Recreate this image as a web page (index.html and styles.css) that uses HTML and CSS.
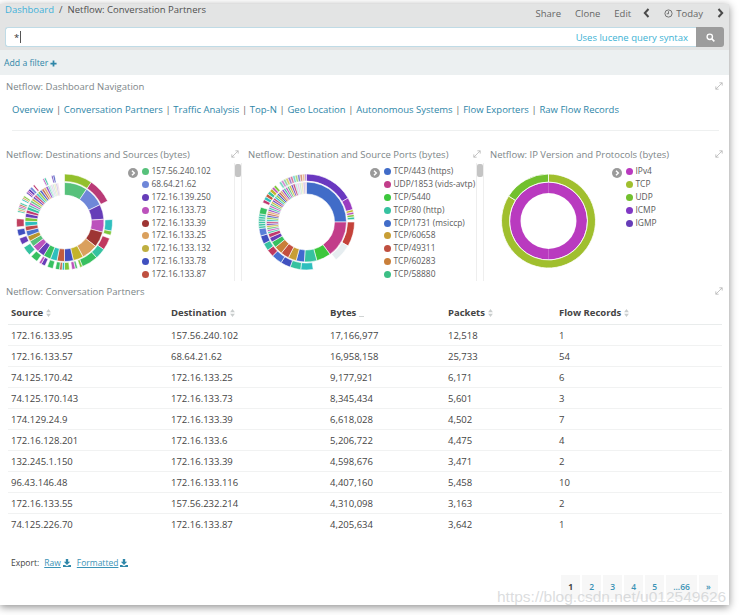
FILE: index.html
```html
<!DOCTYPE html>
<html lang="en">
<head>
<meta charset="utf-8">
<title>Netflow: Conversation Partners</title>
<link rel="stylesheet" href="styles.css">
</head>
<body>
<svg class="defs" width="0" height="0" aria-hidden="true">
  <symbol id="i-expand" viewBox="0 0 10 10"><path d="M1 9l8-8M5.500 1H9v3.500M1 5.500V9h3.500" fill="none" stroke="currentColor" stroke-width="1"/></symbol>
  <symbol id="i-sort" viewBox="0 0 6 10"><path d="M3 0l3 4H0zM3 10L0 6h6z" fill="currentColor"/></symbol>
  <symbol id="i-dl" viewBox="0 0 10 10"><path d="M3.500 0h3v3.500H9L5 7.500 1 3.500h2.500zM0 7.500h2.500L5 9l2.500-1.500H10V10H0z" fill="currentColor"/></symbol>
  <symbol id="i-next" viewBox="0 0 12 12"><circle cx="6" cy="6" r="6" fill="#9a9a9a"/><path d="M4.800 3.200L7.600 6 4.800 8.800" fill="none" stroke="#fff" stroke-width="1.700"/></symbol>
</svg>
<div class="app">
  <header class="topbar">
    <div class="crumbs"><a class="crumb-link">Dashboard</a><span class="crumb-sep">/</span><span>Netflow: Conversation Partners</span></div>
    <nav class="actions">
      <span>Share</span><span>Clone</span><span>Edit</span>
      <svg class="chev chev-prev" viewBox="0 0 7 10"><path d="M5.500 1L1.800 5l3.700 4" fill="none" stroke="currentColor" stroke-width="2"/></svg>
      <span class="today"><svg class="clock" viewBox="0 0 10 10"><circle cx="5" cy="5" r="4" fill="none" stroke="currentColor" stroke-width="1"/><path d="M5 2.500V5.300H3" fill="none" stroke="currentColor" stroke-width="1"/></svg>Today</span>
      <svg class="chev" viewBox="0 0 7 10"><path d="M1.500 1l3.700 4-3.700 4" fill="none" stroke="currentColor" stroke-width="2"/></svg>
    </nav>
  </header>
  <div class="searchrow">
    <div class="searchbox"><span class="query">*</span><span class="caret"></span><a class="lucene">Uses lucene query syntax</a></div>
    <button class="searchbtn" type="button" aria-label="Search"><svg viewBox="0 0 10 10" class="searchicon"><circle cx="4.200" cy="4.200" r="3" fill="none" stroke="#fff" stroke-width="1.500"/><path d="M6.500 6.500L9.300 9.300" stroke="#fff" stroke-width="1.700"/></svg></button>
  </div>
  <div class="filterbar"><a>Add a filter</a><svg class="plus" viewBox="0 0 8 8"><path d="M4 .5v7M.5 4h7" stroke="currentColor" stroke-width="2"/></svg></div>

  <section class="panel nav-panel">
    <div class="panel-head"><h2>Netflow: Dashboard Navigation</h2><svg class="expand"><use href="#i-expand"/></svg></div>
    <p class="navlinks"><a>Overview</a><i>|</i><a>Conversation Partners</a><i>|</i><a>Traffic Analysis</a><i>|</i><a>Top-N</a><i>|</i><a>Geo Location</a><i>|</i><a>Autonomous Systems</a><i>|</i><a>Flow Exporters</a><i>|</i><a>Raw Flow Records</a></p>
    <hr class="rule">
  </section>

  <div class="charts">
    <section class="chart-panel">
      <div class="panel-head"><h2>Netflow: Destinations and Sources (bytes)</h2><svg class="expand"><use href="#i-expand"/></svg></div>
      <div class="chart-body">
        <svg class="donut" id="c1" viewBox="0 0 117 118"></svg>
        <svg class="legend-toggle"><use href="#i-next"/></svg>
        <ul class="legend">
          <li><b class="dot d-a"></b>157.56.240.102</li>
          <li><b class="dot d-b"></b>68.64.21.62</li>
          <li><b class="dot d-c"></b>172.16.139.250</li>
          <li><b class="dot d-d"></b>172.16.133.73</li>
          <li><b class="dot d-e"></b>172.16.133.39</li>
          <li><b class="dot d-f"></b>172.16.133.25</li>
          <li><b class="dot d-g"></b>172.16.133.132</li>
          <li><b class="dot d-h"></b>172.16.133.78</li>
          <li><b class="dot d-i"></b>172.16.133.87</li>
        </ul>
        <div class="scroll"><span></span></div>
      </div>
    </section>
    <section class="chart-panel">
      <div class="panel-head"><h2>Netflow: Destination and Source Ports (bytes)</h2><svg class="expand"><use href="#i-expand"/></svg></div>
      <div class="chart-body">
        <svg class="donut" id="c2" viewBox="0 0 117 118"></svg>
        <svg class="legend-toggle"><use href="#i-next"/></svg>
        <ul class="legend">
          <li><b class="dot d-j"></b>TCP/443 (https)</li>
          <li><b class="dot d-k"></b>UDP/1853 (vids-avtp)</li>
          <li><b class="dot d-l"></b>TCP/5440</li>
          <li><b class="dot d-m"></b>TCP/80 (http)</li>
          <li><b class="dot d-j"></b>TCP/1731 (msiccp)</li>
          <li><b class="dot d-n"></b>TCP/60658</li>
          <li><b class="dot d-i"></b>TCP/49311</li>
          <li><b class="dot d-o"></b>TCP/60283</li>
          <li><b class="dot d-p"></b>TCP/58880</li>
        </ul>
        <div class="scroll"><span></span></div>
      </div>
    </section>
    <section class="chart-panel">
      <div class="panel-head"><h2>Netflow: IP Version and Protocols (bytes)</h2><svg class="expand"><use href="#i-expand"/></svg></div>
      <div class="chart-body">
        <svg class="donut" id="c3" viewBox="0 0 117 118"></svg>
        <svg class="legend-toggle"><use href="#i-next"/></svg>
        <ul class="legend">
          <li><b class="dot d-q"></b>IPv4</li>
          <li><b class="dot d-r"></b>TCP</li>
          <li><b class="dot d-s"></b>UDP</li>
          <li><b class="dot d-t"></b>ICMP</li>
          <li><b class="dot d-c"></b>IGMP</li>
        </ul>
      </div>
    </section>
  </div>

  <section class="panel table-panel">
    <div class="panel-head"><h2>Netflow: Conversation Partners</h2><svg class="expand"><use href="#i-expand"/></svg></div>
    <table class="grid">
      <thead>
        <tr>
          <th>Source<svg class="sort"><use href="#i-sort"/></svg></th>
          <th>Destination<svg class="sort"><use href="#i-sort"/></svg></th>
          <th>Bytes<span class="sort-desc"></span></th>
          <th>Packets<svg class="sort"><use href="#i-sort"/></svg></th>
          <th>Flow Records<svg class="sort"><use href="#i-sort"/></svg></th>
        </tr>
      </thead>
      <tbody>
        <tr><td>172.16.133.95</td><td>157.56.240.102</td><td>17,166,977</td><td>12,518</td><td>1</td></tr>
        <tr><td>172.16.133.57</td><td>68.64.21.62</td><td>16,958,158</td><td>25,733</td><td>54</td></tr>
        <tr><td>74.125.170.42</td><td>172.16.133.25</td><td>9,177,921</td><td>6,171</td><td>6</td></tr>
        <tr><td>74.125.170.143</td><td>172.16.133.73</td><td>8,345,434</td><td>5,601</td><td>3</td></tr>
        <tr><td>174.129.24.9</td><td>172.16.133.39</td><td>6,618,028</td><td>4,502</td><td>7</td></tr>
        <tr><td>172.16.128.201</td><td>172.16.133.6</td><td>5,206,722</td><td>4,475</td><td>4</td></tr>
        <tr><td>132.245.1.150</td><td>172.16.133.39</td><td>4,598,676</td><td>3,471</td><td>2</td></tr>
        <tr><td>96.43.146.48</td><td>172.16.133.116</td><td>4,407,160</td><td>5,458</td><td>10</td></tr>
        <tr><td>172.16.133.55</td><td>157.56.232.214</td><td>4,310,098</td><td>3,163</td><td>2</td></tr>
        <tr><td>74.125.226.70</td><td>172.16.133.87</td><td>4,205,634</td><td>3,642</td><td>1</td></tr>
      </tbody>
    </table>
    <div class="export">Export:<a>Raw</a><svg class="dl"><use href="#i-dl"/></svg><a>Formatted</a><svg class="dl"><use href="#i-dl"/></svg></div>
    <div class="pager"><span class="current">1</span><a>2</a><a>3</a><a>4</a><a>5</a><a class="wide">...66</a><a>»</a></div>
  </section>
</div>
<div class="watermark">https://blog.csdn.net/u012549626</div>
<script src="charts.js"></script>
</body>
</html>
```
FILE: styles.css
```css
* { box-sizing: border-box; }
html, body { margin: 0; padding: 0; }
body {
  width: 740px;
  height: 615px;
  overflow: hidden;
  position: relative;
  background: #fff;
  padding-top: 4px;
  font-family: "Open Sans", "Liberation Sans", sans-serif;
  font-size: 9.500px;
  color: #444;
}
.defs { position: absolute; }
a { color: #2e86a8; }
.app {
  width: 729px;
  height: 601px;
  background: #fff;
  box-shadow: 0 2px 8px rgba(0, 0, 0, .45);
  position: relative;
}
.topbar {
  height: 23px;
  background: #e3e4e4;
  display: flex;
  justify-content: space-between;
  padding: 0 5px;
}
.crumbs { line-height: 11px; font-size: 9.500px; color: #505050; }
.crumb-link { color: #3fb1d9; }
.crumb-sep { margin: 0 5px 0 5px; }
.actions {
  display: flex;
  align-items: center;
  height: 18px;
  color: #666;
  gap: 14px;
}
.chev { width: 7px; height: 10px; color: #4a4a4a; }
.chev-prev { margin-left: -2px; }
.today { display: flex; align-items: center; gap: 3px; }
.clock { width: 9px; height: 9px; }
.searchrow {
  background: #e3e4e4;
  height: 23px;
  padding: 0 5px 3px;
  display: flex;
}
.searchbox {
  width: 691px;
  height: 20px;
  background: #fff;
  border: 1px solid #bfdbe6;
  border-right: 0;
  border-radius: 3px 0 0 3px;
  display: flex;
  align-items: center;
  padding: 0 8px 0 7px;
}
.query { color: #333; margin-left: 1px; }
.caret { width: 1px; height: 12px; background: #555; margin-left: 1px; }
.lucene { margin-left: auto; color: #3cb2d4; }
.searchbtn {
  width: 28px;
  height: 20px;
  padding: 0;
  border: 0;
  background: #9c9c9c;
  border-radius: 0 3px 3px 0;
  display: flex;
  align-items: center;
  justify-content: center;
}
.searchicon { width: 9px; height: 9px; }
.filterbar {
  height: 25px;
  background: #ecf0f1;
  padding: 7px 4px 0;
  display: flex;
  align-items: flex-start;
  line-height: 13px;
  font-size: 8.700px;
  color: #2e86a8;
}
.plus { width: 7px; height: 7px; margin: 3px 0 0 2px; }
.panel-head {
  display: flex;
  justify-content: space-between;
  align-items: center;
  height: 14px;
}
.panel-head h2 {
  margin: 0;
  font-size: 9.500px;
  font-weight: 400;
  color: #7d8688;
}
.expand { width: 8px; height: 8px; color: #b5b5b5; }
.panel { padding: 4px 6px 0 6px; }
.nav-panel { height: 72px; }
.navlinks {
  margin: 10px 0 0 6px;
  line-height: 14px;
  color: #666;
  white-space: nowrap;
}
.navlinks a { color: #2e86a8; }
.navlinks i { font-style: normal; margin: 0 2.700px; }
.rule {
  margin: 13px 4px 0 6px;
  border: 0;
  border-top: 1px solid #eef0f0;
}
.charts {
  display: grid;
  grid-template-columns: repeat(3, 242px);
  padding-left: 6px;
  height: 137px;
}
.chart-panel { padding-right: 6px; }
.chart-panel .expand { margin-right: 3px; }
.chart-body {
  display: flex;
  height: 118px;
  margin-top: 2px;
  position: relative;
}
.donut { width: 117px; height: 118px; flex: none; }
.legend-toggle { width: 10px; height: 10px; margin: 5px 0 0 5px; flex: none; }
.legend {
  list-style: none;
  margin: 2px 0 0 4px;
  padding: 0;
  height: 116px;
  overflow: hidden;
  flex: 1;
  min-width: 0;
  font-size: 8.400px;
}
.legend li {
  height: 12.900px;
  line-height: 12.900px;
  display: flex;
  align-items: center;
  color: #5a5a5a;
  white-space: nowrap;
}
.dot { width: 7px; height: 7px; border-radius: 50%; margin-right: 2.500px; flex: none; }
.d-a { background: #57c17b; }
.d-b { background: #6f87d8; }
.d-c { background: #663db8; }
.d-d { background: #bc52bc; }
.d-e { background: #9e3533; }
.d-f { background: #daa05d; }
.d-g { background: #bfaf40; }
.d-h { background: #4050bf; }
.d-i { background: #bf5040; }
.d-j { background: #416cc8; }
.d-k { background: #c23d8a; }
.d-l { background: #3cc73c; }
.d-m { background: #36c2a0; }
.d-n { background: #c89e35; }
.d-o { background: #c97f3a; }
.d-p { background: #3cbf85; }
.d-q { background: #b93abf; }
.d-r { background: #a0bf2e; }
.d-s { background: #72c02e; }
.d-t { background: #8038c4; }
.scroll {
  width: 8px;
  border-left: 1px solid #eee;
  border-right: 1px solid #eee;
  flex: none;
  padding: 1px 0 0;
}
.scroll span { display: block; width: 6px; height: 13px; border-radius: 2px; background: #c4c4c4; }
.table-panel { padding: 0 6px; position: relative; height: 321px; }
.grid {
  width: 714px;
  margin: 4px 0 0 2px;
  border-collapse: separate;
  border-spacing: 0;
  table-layout: fixed;
  color: #444;
}
.grid th:nth-child(1) { width: 160px; }
.grid th:nth-child(2) { width: 159px; }
.grid th:nth-child(3) { width: 118px; }
.grid th:nth-child(4) { width: 111px; }
.grid th {
  height: 23px;
  text-align: left;
  font-weight: 700;
  padding: 0 3px 2px;
  color: #444;
  border-bottom: 1px solid #e9ecec;
}
.grid td {
  height: 21px;
  padding: 0 3px;
  border-bottom: 1px solid #f1f2f2;
}
.grid tr:last-child td { border-bottom: 0; }
.sort { width: 5px; height: 8px; margin-left: 3px; color: #c9cdcd; vertical-align: -1px; }
.sort-desc { display: inline-block; width: 5px; height: 1px; margin-left: 3px; background: #d0d4d4; vertical-align: -1px; }
.export {
  margin: 22px 0 0 5px;
  font-size: 8.500px;
  color: #444;
  display: flex;
  align-items: center;
  line-height: 12px;
}
.export a { text-decoration: underline; color: #3b93b6; margin-left: 5px; }
.dl { width: 8px; height: 8px; color: #2e86a8; margin-left: 2px; margin-right: 1px; }
.pager {
  display: flex;
  gap: 1.700px;
  position: absolute;
  right: 11px;
  top: 291px;
  font-size: 8.500px;
}
.pager a, .pager span {
  height: 24px;
  width: 19.300px;
  background: #f7f7f7;
  color: #3b93b6;
  font-weight: 600;
  text-align: center;
  line-height: 24px;
}
.pager .wide { width: 31px; }
.pager .current { color: #444; font-weight: 700; }
.watermark {
  position: absolute;
  left: 497px;
  top: 588px;
  width: 240px;
  font-family: "Liberation Sans", sans-serif;
  font-size: 15.500px;
  line-height: 18px;
  color: rgba(195, 198, 200, .6);
  white-space: nowrap;
}
```
FILE: charts.js
```js
(function () {
  var NS = 'http://www.w3.org/2000/svg';
  function pt(cx, cy, r, deg) {
    var a = (deg - 90) * Math.PI / 180;
    return (cx + r * Math.cos(a)).toFixed(2) + ' ' + (cy + r * Math.sin(a)).toFixed(2);
  }
  function ring(svg, cx, cy, r0, r1, segs, sw) {
    var at = 0;
    segs.forEach(function (s) {
      var w = s[0], c = s[1], a0 = at, a1 = Math.min(at + w, 360);
      at += w;
      if (!c || a1 <= a0) return;
      var big = a1 - a0 > 180 ? 1 : 0;
      var p = document.createElementNS(NS, 'path');
      p.setAttribute('d', 'M' + pt(cx, cy, r1, a0) + 'A' + r1 + ' ' + r1 + ' 0 ' + big + ' 1 ' + pt(cx, cy, r1, a1) +
        'L' + pt(cx, cy, r0, a1) + 'A' + r0 + ' ' + r0 + ' 0 ' + big + ' 0 ' + pt(cx, cy, r0, a0) + 'Z');
      p.setAttribute('fill', c);
      p.setAttribute('stroke', sw === 0 ? c : '#fff');
      p.setAttribute('stroke-width', sw === undefined ? .6 : (sw || .1));
      if (s[2]) p.setAttribute('opacity', s[2]);
      svg.appendChild(p);
    });
  }
  var G = '#57c17b', B = '#6f87d8', P = '#663db8', M = '#bc52bc', DR = '#9e3533', O = '#daa05d', Y = '#c4b32b',
      BL = '#4050bf', R = '#c15c3f', T = '#2fbfbe', TG = '#36c2a0', LG = '#7fc63a', CR = '#c0386f', GR = '#37c060',
      OL = '#93c02d', V = '#8a3cc4';
  var cyc = [TG, M, G, Y, P, CR, T, LG, BL, R, O, V];
  function stripes(total, w, op, gapEvery, start) {
    var out = [], i = start || 0, used = 0;
    while (used < total) {
      var k = Math.min(w, total - used);
      out.push([k, (gapEvery && i % gapEvery === gapEvery - 1) ? null : cyc[i % cyc.length], op]);
      used += k; i++;
    }
    return out;
  }
  /* Destinations and Sources */
  var c1 = document.getElementById('c1');
  ring(c1, 58.500, 59, 27, 39.500, [
    [34, G], [30, B], [22, P], [19, M], [23, DR], [24, O], [15, Y], [13, BL], [11, R], [10, T], [11, GR], [10, P], [10, M],
    [9, G], [8, '#b9962e'], [8, '#4a72cc'], [7, '#c04a4a'], [7, T], [6, LG], [6, P], [5, CR], [5, TG]
  ].concat(stripes(44, 3.500, .85)).concat(stripes(14, 2.500, .3)));
  ring(c1, 58.500, 59, 40.500, 48, [
    [34, OL], [30, '#b93a76'], [23, null], [14, T], [5, LG], [4, null], [15, '#c0385f'], [13, TG], [20, GR],
    [3, LG], [3, null], [3, G], [4, M], [3, null], [6, LG], [3, T], [3, R], [5, GR], [3, null], [7, GR], [3, null],
    [5, P], [3, M], [3, null], [9, GR], [3, null], [11, TG], [4, null], [8, P], [3, null], [8, BL], [3, null], [10, '#c0405f'],
    [8, null], [2, TG], [2, O], [2, G], [2, M], [2, R], [2, TG], [3, null], [2, T], [2, O], [2, LG], [4, null],
    [2, P], [2, M], [3, P], [3, B], [2, null], [2, CR], [12, null], [2, M], [2, TG], [7, null], [2, P], [2, BL],
    [12, null], [1.500, CR, .6], [7, null], [1.500, LG, .5], [9, null], [1.500, TG, .3], [6, null], [1.500, CR, .8], [100, null]
  ]);
  /* Destination and Source Ports */
  var c2 = document.getElementById('c2');
  ring(c2, 58.500, 59, 28, 40, [
    [90, '#416cc8'], [54, '#c23d8a'], [21, '#3cc73c'], [18, TG], [12, '#4169cf'], [12, '#c89e35'], [12, '#c44f3e'], [12, '#c97f3a'],
    [9, GR], [7, P], [6, CR]
  ].concat(stripes(90, 3, .9)).concat(stripes(17, 3, .3)));
  ring(c2, 58.500, 59, 41, 48, [
    [60, '#6a38c0'], [15, '#9a3cc0'], [3, Y], [3, M], [3, LG], [3, TG], [3, null], [30, '#c4423a'], [22, '#e6edf0'], [30, null],
    [15, T], [13, TG], [12, BL], [13, '#4a6fd0'], [9, '#c0385f'], [9, TG], [10, BL], [9, '#5a7fd8']
  ].concat(stripes(18, 3, .95, 0, 0).map(function (s) { s[1] = TG; return s; }))
   .concat([[8, GR], [6, null], [4, CR], [4, T], [4, R], [4, TG], [4, Y], [3, M], [3, LG], [5, null]])
   .concat(stripes(36, 3, .65)).concat([[8, '#dfe9ee'], [100, null]]));
  /* IP Version and Protocols */
  var c3 = document.getElementById('c3');
  ring(c3, 58.500, 58, 28, 38.500, [[180, '#b93abf'], [180, '#b93abf']], 0);
  ring(c3, 58.500, 58, 39, 47, [[302, '#a0bf2e'], [58, '#72c02e']], .8);
})();
```
